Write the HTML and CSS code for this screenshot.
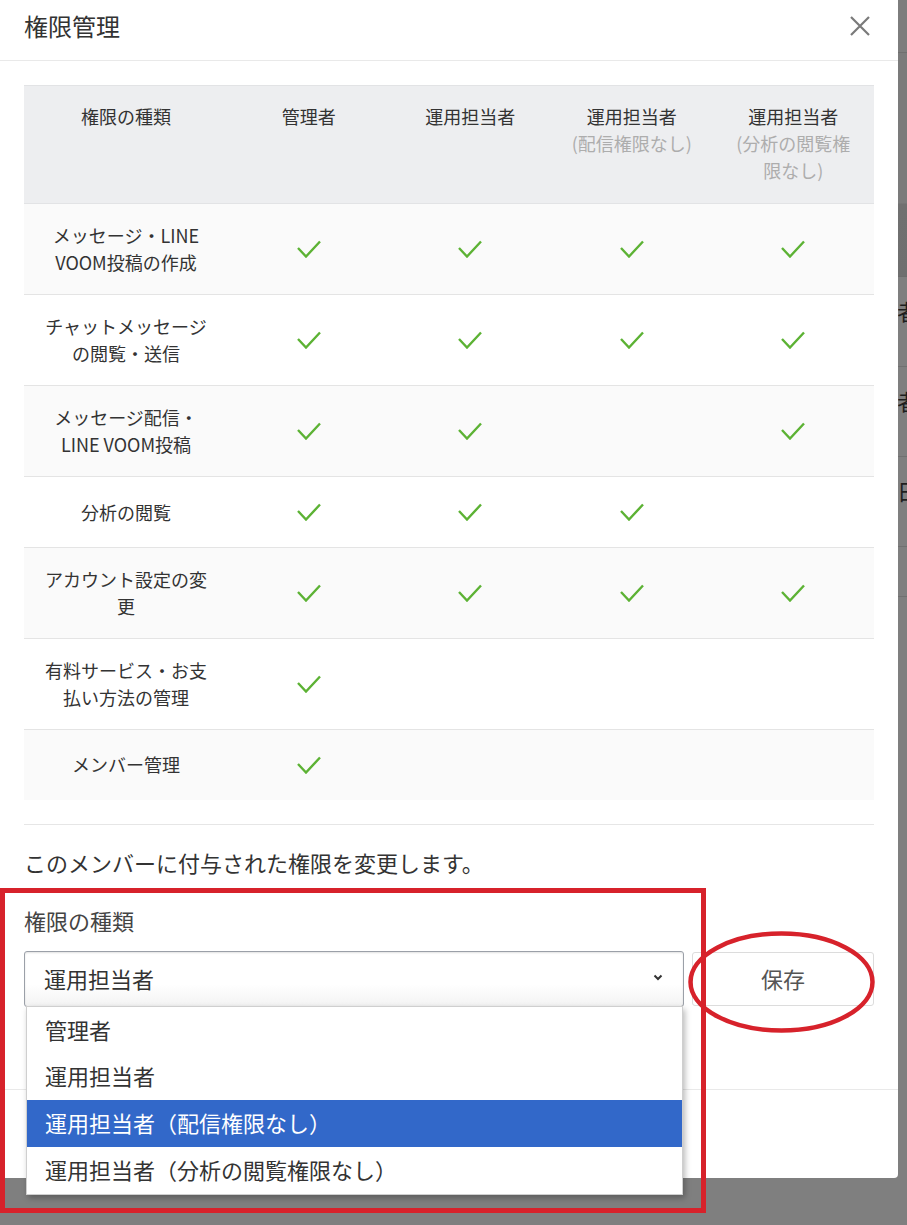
FILE: index.html
```html
<!DOCTYPE html>
<html lang="ja">
<head>
<meta charset="utf-8">
<title>権限管理</title>
<link rel="stylesheet" href="styles.css">
</head>
<body>
<div class="behind">
  <div class="b-top"></div>
  <div class="b-band"></div>
  <div class="b-row">者</div>
  <div class="b-row">者</div>
  <div class="b-row">日</div>
  <div class="b-row b-last"></div>
</div>

<div class="modal">
  <div class="modal-header">
    <h1 class="modal-title">権限管理</h1>
    <svg class="close" width="22" height="22" viewBox="0 0 22 22"><path d="M2 2 L20 20 M20 2 L2 20" stroke="#7a7a7a" stroke-width="2.2" fill="none"/></svg>
  </div>

  <div class="modal-body">
    <table class="perm">
      <colgroup>
        <col class="c-name"><col class="c-role"><col class="c-role"><col class="c-role"><col class="c-role">
      </colgroup>
      <thead>
        <tr>
          <th class="first">権限の種類</th>
          <th>管理者</th>
          <th>運用担当者</th>
          <th>運用担当者<span class="sub">(配信権限なし)</span></th>
          <th>運用担当者<span class="sub">(分析の閲覧権限なし)</span></th>
        </tr>
      </thead>
      <tbody>
        <tr>
          <td class="first">メッセージ・LINE VOOM投稿の作成</td>
          <td><svg class="chk" viewBox="0 0 24 18"><polyline points="1,8 9,16.5 23,1.5"/></svg></td>
          <td><svg class="chk" viewBox="0 0 24 18"><polyline points="1,8 9,16.5 23,1.5"/></svg></td>
          <td><svg class="chk" viewBox="0 0 24 18"><polyline points="1,8 9,16.5 23,1.5"/></svg></td>
          <td><svg class="chk" viewBox="0 0 24 18"><polyline points="1,8 9,16.5 23,1.5"/></svg></td>
        </tr>
        <tr>
          <td class="first">チャットメッセージの閲覧・送信</td>
          <td><svg class="chk" viewBox="0 0 24 18"><polyline points="1,8 9,16.5 23,1.5"/></svg></td>
          <td><svg class="chk" viewBox="0 0 24 18"><polyline points="1,8 9,16.5 23,1.5"/></svg></td>
          <td><svg class="chk" viewBox="0 0 24 18"><polyline points="1,8 9,16.5 23,1.5"/></svg></td>
          <td><svg class="chk" viewBox="0 0 24 18"><polyline points="1,8 9,16.5 23,1.5"/></svg></td>
        </tr>
        <tr>
          <td class="first">メッセージ配信・LINE VOOM投稿</td>
          <td><svg class="chk" viewBox="0 0 24 18"><polyline points="1,8 9,16.5 23,1.5"/></svg></td>
          <td><svg class="chk" viewBox="0 0 24 18"><polyline points="1,8 9,16.5 23,1.5"/></svg></td>
          <td></td>
          <td><svg class="chk" viewBox="0 0 24 18"><polyline points="1,8 9,16.5 23,1.5"/></svg></td>
        </tr>
        <tr>
          <td class="first">分析の閲覧</td>
          <td><svg class="chk" viewBox="0 0 24 18"><polyline points="1,8 9,16.5 23,1.5"/></svg></td>
          <td><svg class="chk" viewBox="0 0 24 18"><polyline points="1,8 9,16.5 23,1.5"/></svg></td>
          <td><svg class="chk" viewBox="0 0 24 18"><polyline points="1,8 9,16.5 23,1.5"/></svg></td>
          <td></td>
        </tr>
        <tr>
          <td class="first">アカウント設定の変更</td>
          <td><svg class="chk" viewBox="0 0 24 18"><polyline points="1,8 9,16.5 23,1.5"/></svg></td>
          <td><svg class="chk" viewBox="0 0 24 18"><polyline points="1,8 9,16.5 23,1.5"/></svg></td>
          <td><svg class="chk" viewBox="0 0 24 18"><polyline points="1,8 9,16.5 23,1.5"/></svg></td>
          <td><svg class="chk" viewBox="0 0 24 18"><polyline points="1,8 9,16.5 23,1.5"/></svg></td>
        </tr>
        <tr>
          <td class="first">有料サービス・お支払い方法の管理</td>
          <td><svg class="chk" viewBox="0 0 24 18"><polyline points="1,8 9,16.5 23,1.5"/></svg></td>
          <td></td><td></td><td></td>
        </tr>
        <tr>
          <td class="first">メンバー管理</td>
          <td><svg class="chk" viewBox="0 0 24 18"><polyline points="1,8 9,16.5 23,1.5"/></svg></td>
          <td></td><td></td><td></td>
        </tr>
      </tbody>
    </table>

    <div class="divider"></div>

    <p class="desc">このメンバーに付与された権限を変更します。</p>
    <p class="label">権限の種類</p>

    <div class="field-row">
      <div class="select-wrap">
        <div class="select">
          <span>運用担当者</span>
          <svg class="caret" width="10" height="7" viewBox="0 0 10 7"><polyline points="1.5,1.5 5,5 8.5,1.5"/></svg>
        </div>
        <ul class="dropdown">
          <li>管理者</li>
          <li>運用担当者</li>
          <li class="active">運用担当者（配信権限なし）</li>
          <li>運用担当者（分析の閲覧権限なし）</li>
        </ul>
      </div>
      <button class="save">保存</button>
    </div>
  </div>

  <div class="modal-footer"></div>
</div>

<svg class="annot" width="907" height="1225" viewBox="0 0 907 1225">
  <rect x="2.5" y="890.5" width="701" height="320" fill="none" stroke="#d7222b" stroke-width="5"/>
  <ellipse cx="781.5" cy="982" rx="91" ry="48.5" fill="none" stroke="#d7222b" stroke-width="4.5"/>
</svg>
</body>
</html>
```

FILE: styles.css
```css
* { box-sizing: border-box; }

html, body {
  margin: 0;
  padding: 0;
}

body {
  width: 907px;
  height: 1225px;
  overflow: hidden;
  position: relative;
  background: #7f7f7f;
  font-family: "Noto Sans CJK JP", "Noto Sans", sans-serif;
  color: #333;
}

/* page behind the backdrop, peeking on the right */
.behind {
  position: absolute;
  left: 870px;
  top: 0;
  width: 37px;
  height: 1225px;
  z-index: 0;
}
.b-top {
  height: 53px;
  border-bottom: 1px solid #6f6f6f;
  background: #7d7d7d;
}
.b-band {
  height: 224px;
  background: linear-gradient(#7b7b7b 0, #7b7b7b 150px, #707070 151px, #6f6f6f 224px);
  border-bottom: 1px solid #6c6c6c;
}
.b-row {
  height: 90px;
  border-bottom: 1px solid #707070;
  padding: 18px 0 0 27px;
  font-size: 22px;
  line-height: 30px;
  color: #1e1e1e;
}
.b-last { height: 50px; }

.modal {
  position: relative;
  z-index: 1;
  width: 898px;
  height: 1178px;
  background: #fff;
  border-radius: 0 0 4px 0;
  display: flex;
  flex-direction: column;
}

.modal-header {
  height: 61px;
  flex: none;
  border-bottom: 1px solid #e9e9e9;
  display: flex;
  align-items: center;
  justify-content: space-between;
  padding: 0 27px 8px 24px;
}
.modal-title {
  margin: 0;
  font-size: 24px;
  font-weight: 400;
  color: #333;
  line-height: 34px;
}
.close { display: block; }

.modal-body {
  padding: 24px 24px 0 24px;
  flex: none;
  height: 1028px;
}

.perm {
  width: 850px;
  border-collapse: collapse;
  table-layout: fixed;
  font-size: 18px;
  line-height: 27px;
}
.c-name { width: 204px; }
.c-role { width: 161.5px; }

.perm th {
  background: #edeef0;
  font-weight: 400;
  color: #333;
  text-align: center;
  vertical-align: top;
  padding: 17px 16px 19px;
  height: 118px;
  border-top: 1px solid #e2e3e5;
}
.perm th.first { padding-left: 20px; padding-right: 20px; }
.perm .sub { display: block; color: #adadad; }

.perm td {
  text-align: center;
  vertical-align: middle;
  padding: 18px 16px;
  height: 70px;
  border-top: 1px solid #e4e4e4;
  color: #333;
}
.perm td.first { padding-left: 20px; padding-right: 20px; }
.perm tbody tr:nth-child(odd) td { background: #fafafa; }
.perm tbody tr:first-child td { border-top-color: #e2e3e5; }
.perm tbody tr:nth-child(4) td { height: 71px; }

.chk {
  width: 24px;
  height: 18px;
  display: block;
  margin: 0 auto;
  fill: none;
  stroke: #5cb234;
  stroke-width: 2.4;
}

.divider {
  height: 1px;
  background: #e6e6e6;
  margin-top: 24px;
}

.desc {
  margin: 21px 0 0;
  font-size: 22px;
  line-height: 33px;
  color: #333;
}
.label {
  margin: 25px 0 0;
  font-size: 22px;
  line-height: 33px;
  color: #444;
}

.field-row {
  margin-top: 14px;
  display: flex;
  gap: 8px;
  align-items: flex-start;
}

.select-wrap {
  position: relative;
  width: 660px;
  flex: none;
}
.select {
  height: 56px;
  border: 1px solid #9ba0a8;
  border-radius: 3px;
  background: linear-gradient(#ffffff 0, #ffffff 60%, #f3f3f3 100%);
  box-shadow: inset 0 1px 2px rgba(0,0,0,0.12);
  display: flex;
  align-items: center;
  justify-content: space-between;
  padding: 0 20px 2px 19px;
  font-size: 22px;
  color: #333;
}
.caret {
  fill: none;
  stroke: #333;
  stroke-width: 2;
}

.dropdown {
  position: absolute;
  left: 2px;
  top: 55px;
  width: 657px;
  margin: 0;
  padding: 0;
  list-style: none;
  background: #fff;
  border: 1px solid #cfcfcf;
  box-shadow: 2px 3px 6px rgba(0,0,0,0.28);
  z-index: 5;
}
.dropdown li {
  height: 46.75px;
  line-height: 44px;
  padding-left: 18px;
  font-size: 22px;
  color: #333;
}
.dropdown li.active {
  background: #3268c9;
  color: #fff;
}

.save {
  width: 182px;
  height: 54px;
  margin-top: 1px;
  background: #fff;
  border: 1px solid #dcdcdc;
  border-radius: 3px;
  font-family: inherit;
  font-size: 22px;
  color: #555;
  padding: 0 0 2px;
}

.modal-footer {
  flex: 1;
  border-top: 1px solid #e9e9e9;
}

.annot {
  position: absolute;
  left: 0;
  top: 0;
  z-index: 10;
  pointer-events: none;
}
```
